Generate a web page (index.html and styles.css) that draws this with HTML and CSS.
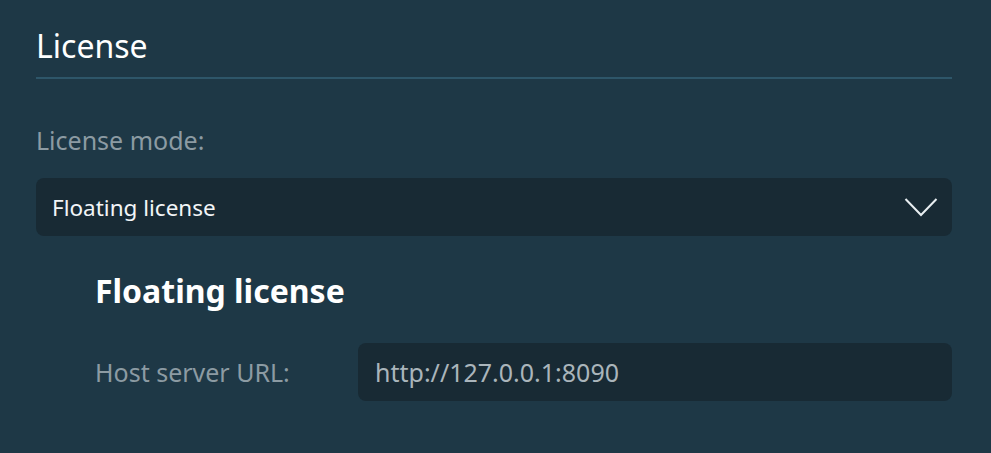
FILE: index.html
```html
<!DOCTYPE html>
<html lang="en">
<head>
<meta charset="utf-8">
<title>License</title>
<link rel="stylesheet" href="styles.css">
</head>
<body>
<main class="page">
  <h1 class="title">License</h1>
  <div class="field-label">License mode:</div>
  <div class="select">
    <span class="select-value">Floating license</span>
    <svg class="chevron" width="34" height="20" viewBox="0 0 34 20" aria-hidden="true">
      <polyline points="1.5,2 17,18 32.5,2" fill="none" stroke="#e8eef1" stroke-width="2"/>
    </svg>
  </div>
  <section class="sub">
    <h2 class="sub-title">Floating license</h2>
    <div class="row">
      <div class="row-label">Host server URL:</div>
      <div class="input">http://127.0.0.1:8090</div>
    </div>
  </section>
</main>
</body>
</html>
```
FILE: styles.css
```css
html, body {
  margin: 0;
  padding: 0;
  background: #1e3846;
  height: 100%;
}
body {
  font-family: "Noto Sans", "Open Sans", sans-serif;
  color: #ffffff;
}
.page {
  padding: 0 39px 0 36px;
}
.title {
  margin: 0;
  padding-top: 26px;
  padding-bottom: 11px;
  font-size: 32px;
  font-weight: 400;
  line-height: 40px;
  border-bottom: 2px solid #2e5669;
}
.field-label {
  margin-top: 44px;
  font-size: 25px;
  line-height: 34px;
  color: #8c9ba3;
}
.select {
  margin-top: 21px;
  height: 58px;
  box-sizing: border-box;
  background: #182a34;
  border-radius: 8px;
  display: flex;
  align-items: center;
  justify-content: space-between;
  padding: 0 14px 0 16px;
}
.select-value {
  font-size: 22.5px;
  color: #f2f5f7;
}
.chevron {
  display: block;
}
.sub {
  padding-left: 59px;
}
.sub-title {
  margin: 33px 0 0;
  font-size: 32px;
  font-weight: 700;
  line-height: 44px;
}
.row {
  margin-top: 30px;
  display: flex;
  align-items: center;
}
.row-label {
  width: 263px;
  flex: none;
  font-size: 25px;
  color: #8c9ba3;
}
.input {
  flex: 1;
  height: 58px;
  box-sizing: border-box;
  background: #182a34;
  border-radius: 8px;
  display: flex;
  align-items: center;
  padding-left: 17px;
  font-size: 25px;
  color: #aab5bb;
}
```
